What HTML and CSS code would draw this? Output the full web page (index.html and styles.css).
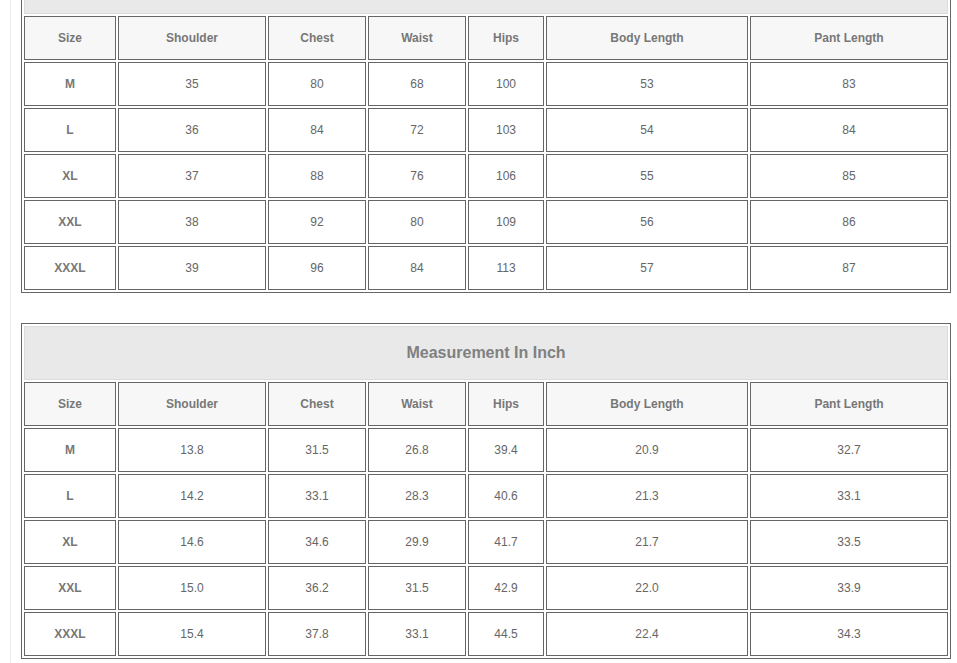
FILE: index.html
```html
<!DOCTYPE html>
<html lang="en">
<head>
<meta charset="utf-8">
<title>Size Chart</title>
<link rel="stylesheet" href="styles.css">
</head>
<body>
<div class="page">
  <table class="chart">
    <colgroup>
      <col class="c-size"><col class="c-shoulder"><col class="c-chest"><col class="c-waist"><col class="c-hips"><col class="c-body"><col class="c-pant">
    </colgroup>
    <tr class="title-row"><td colspan="7" class="title">Measurement In CM</td></tr>
    <tr class="head-row"><th>Size</th><th>Shoulder</th><th>Chest</th><th>Waist</th><th>Hips</th><th>Body Length</th><th>Pant Length</th></tr>
    <tr><th class="size">M</th><td>35</td><td>80</td><td>68</td><td>100</td><td>53</td><td>83</td></tr>
    <tr><th class="size">L</th><td>36</td><td>84</td><td>72</td><td>103</td><td>54</td><td>84</td></tr>
    <tr><th class="size">XL</th><td>37</td><td>88</td><td>76</td><td>106</td><td>55</td><td>85</td></tr>
    <tr><th class="size">XXL</th><td>38</td><td>92</td><td>80</td><td>109</td><td>56</td><td>86</td></tr>
    <tr><th class="size">XXXL</th><td>39</td><td>96</td><td>84</td><td>113</td><td>57</td><td>87</td></tr>
  </table>

  <table class="chart">
    <colgroup>
      <col class="c-size"><col class="c-shoulder"><col class="c-chest"><col class="c-waist"><col class="c-hips"><col class="c-body"><col class="c-pant">
    </colgroup>
    <tr class="title-row"><td colspan="7" class="title">Measurement In Inch</td></tr>
    <tr class="head-row"><th>Size</th><th>Shoulder</th><th>Chest</th><th>Waist</th><th>Hips</th><th>Body Length</th><th>Pant Length</th></tr>
    <tr><th class="size">M</th><td>13.8</td><td>31.5</td><td>26.8</td><td>39.4</td><td>20.9</td><td>32.7</td></tr>
    <tr><th class="size">L</th><td>14.2</td><td>33.1</td><td>28.3</td><td>40.6</td><td>21.3</td><td>33.1</td></tr>
    <tr><th class="size">XL</th><td>14.6</td><td>34.6</td><td>29.9</td><td>41.7</td><td>21.7</td><td>33.5</td></tr>
    <tr><th class="size">XXL</th><td>15.0</td><td>36.2</td><td>31.5</td><td>42.9</td><td>22.0</td><td>33.9</td></tr>
    <tr><th class="size">XXXL</th><td>15.4</td><td>37.8</td><td>33.1</td><td>44.5</td><td>22.4</td><td>34.3</td></tr>
  </table>
</div>
</body>
</html>
```
FILE: styles.css
```css
html, body {
  margin: 0;
  padding: 0;
  background: #fff;
}

body {
  font-family: "Liberation Sans", Arial, sans-serif;
  font-size: 12px;
  color: #666;
  overflow: hidden;
}

.page {
  margin-top: -43px;
  margin-left: 10px;
  padding-left: 10px;
  border-left: 1px solid #ededed;
  min-height: 760px;
}

.chart {
  width: 930px;
  table-layout: fixed;
  border-collapse: separate;
  border-spacing: 2px;
  border: 1px solid #666;
  margin: 0 0 30px 0;
}

.c-size { width: 92px; }
.c-shoulder { width: 148px; }
.c-chest { width: 98px; }
.c-waist { width: 98px; }
.c-hips { width: 76px; }
.c-body { width: 202px; }
.c-pant { width: 198px; }

.chart tr { height: 44px; }
.chart tr.title-row { height: 54px; }

.chart td,
.chart th {
  border: 1px solid #666;
  padding: 0;
  text-align: center;
  vertical-align: middle;
  box-sizing: border-box;
}

.chart td {
  font-weight: normal;
  color: #666;
  font-size: 12px;
}

.chart th {
  font-weight: bold;
  color: #777;
  font-size: 12px;
}

.head-row th {
  background: #f7f7f7;
}

.chart .title {
  background: #e9e9e9;
  border: 1px solid #dcdcdc;
  font-weight: bold;
  font-size: 16px;
  color: #808080;
}
```
